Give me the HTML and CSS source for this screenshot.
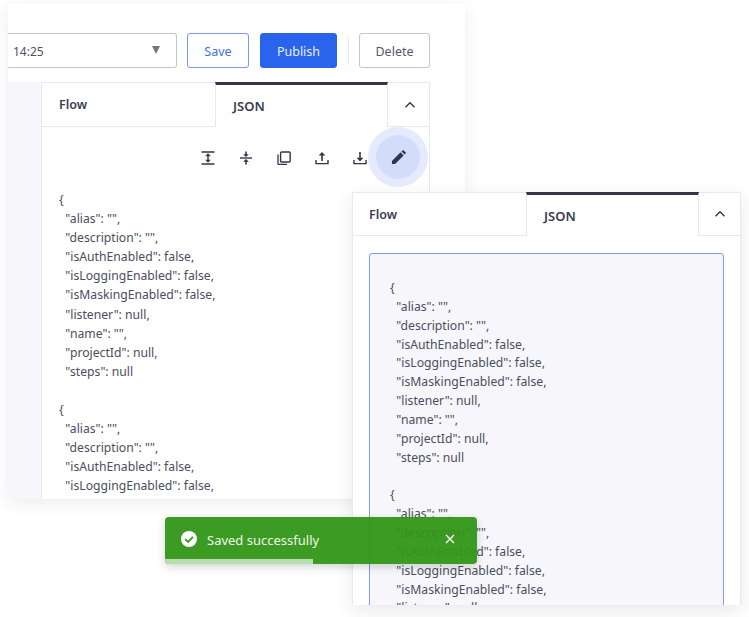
FILE: index.html
```html
<!DOCTYPE html>
<html lang="en">
<head>
<meta charset="utf-8">
<title>JSON editor</title>
<link rel="stylesheet" href="styles.css">
</head>
<body>
<section class="window back">
  <div class="toolbar">
    <div class="select"><span>14:25</span><i class="caret"></i></div>
    <button class="btn btn-save">Save</button>
    <button class="btn btn-publish">Publish</button>
    <span class="divider"></span>
    <button class="btn btn-delete">Delete</button>
  </div>
  <div class="main">
    <div class="rail"></div>
    <div class="panel panel-back">
      <div class="tabs tabs-back">
        <div class="tab">Flow</div>
        <div class="tab active">JSON</div>
        <div class="toggle"><svg width="12" height="8" viewBox="0 0 12 8"><path d="M1.5 6.2 6 1.8l4.5 4.4" fill="none" stroke="#33364a" stroke-width="1.4"/></svg></div>
      </div>
      <div class="icons">
        <svg class="ic" viewBox="0 0 14 14" width="14" height="14"><path d="M.5 1h13M.5 13h13" stroke="#33364a" stroke-width="1.4"/><path d="M7 2.2 9.8 5.200H4.200zM7 11.800 4.200 8.800h5.600zM6.300 4h1.400v6H6.300z" fill="#33364a"/></svg>
        <svg class="ic" viewBox="0 0 14 14" width="14" height="14"><path d="M1 7h12" stroke="#33364a" stroke-width="1.4"/><path d="M7 6 4.200 3.200h2V.5h1.600v2.700h2zM7 8l2.800 2.800h-2v2.700H6.200v-2.700h-2z" fill="#33364a"/></svg>
        <svg class="ic" viewBox="0 0 14 14" width="14" height="14"><path d="M1 3.500v9a1 1 0 0 0 1 1h8" fill="none" stroke="#33364a" stroke-width="1.3"/><rect x="3.600" y="1" width="9.600" height="10" rx="1" fill="none" stroke="#33364a" stroke-width="1.4"/></svg>
        <svg class="ic" viewBox="0 0 14 14" width="14" height="14"><path d="M1 9v3.600h12V9" fill="none" stroke="#33364a" stroke-width="1.4"/><path d="M7 1 10.400 4.600H7.800V10H6.200V4.600H3.600z" fill="#33364a"/></svg>
        <svg class="ic" viewBox="0 0 14 14" width="14" height="14"><path d="M1 9v3.600h12V9" fill="none" stroke="#33364a" stroke-width="1.4"/><path d="M7 10.400 3.600 6.800h2.600V1h1.600v5.800h2.600z" fill="#33364a"/></svg>
        <div class="edit"><svg viewBox="0 0 16 16" width="15" height="15"><path d="M1 15v-3.300L10.200 2.500l3.300 3.300L4.300 15zM11.200 1.500l1-1a1 1 0 0 1 1.400 0l1.900 1.900a1 1 0 0 1 0 1.400l-1 1z" fill="#33364a"/></svg></div>
      </div>
      <pre class="code code-back">{
  "alias": "",
  "description": "",
  "isAuthEnabled": false,
  "isLoggingEnabled": false,
  "isMaskingEnabled": false,
  "listener": null,
  "name": "",
  "projectId": null,
  "steps": null

{
  "alias": "",
  "description": "",
  "isAuthEnabled": false,
  "isLoggingEnabled": false,
  "isMaskingEnabled": false,</pre>
    </div>
  </div>
</section>

<section class="window front">
  <div class="tabs">
    <div class="tab">Flow</div>
    <div class="tab active">JSON</div>
    <div class="toggle"><svg width="12" height="8" viewBox="0 0 12 8"><path d="M1.5 6.2 6 1.800l4.500 4.400" fill="none" stroke="#33364a" stroke-width="1.4"/></svg></div>
  </div>
  <div class="editor-wrap">
    <pre class="code code-front">{
  "alias": "",
  "description": "",
  "isAuthEnabled": false,
  "isLoggingEnabled": false,
  "isMaskingEnabled": false,
  "listener": null,
  "name": "",
  "projectId": null,
  "steps": null

{
  "alias": "",
  "description": "",
  "isAuthEnabled": false,
  "isLoggingEnabled": false,
  "isMaskingEnabled": false,
  "listener": null,</pre>
  </div>
</section>

<div class="toast">
  <div class="toast-body">
    <svg class="check" viewBox="0 0 16 16" width="16" height="16"><circle cx="8" cy="8" r="8" fill="#fff"/><path d="M4.200 8.200 7 11l5-5.200" fill="none" stroke="#3a9b20" stroke-width="1.900"/></svg>
    <span class="toast-text">Saved successfully</span>
    <svg class="close" viewBox="0 0 10 10" width="10" height="10"><path d="M1 1l8 8M9 1 1 9" stroke="#fff" stroke-width="1.400"/></svg>
  </div>
  <div class="progress"></div>
</div>
</body>
</html>
```
FILE: styles.css
```css
html, body {
  margin: 0;
  padding: 0;
  background: #fff;
  width: 749px;
  height: 617px;
  overflow: hidden;
  font-family: "Noto Sans", "Open Sans", sans-serif;
  color: #33364a;
}
.window {
  position: absolute;
  background: #fff;
  box-sizing: border-box;
  overflow: hidden;
}
.back {
  left: 8px;
  top: 4px;
  width: 457px;
  height: 495px;
  box-shadow: 0 4px 16px rgba(40, 44, 80, .09);
}
.toolbar {
  display: flex;
  align-items: center;
  height: 35px;
  margin-top: 29px;
}
.select {
  box-sizing: border-box;
  width: 169px;
  height: 35px;
  display: flex;
  align-items: center;
  justify-content: space-between;
  padding: 1px 16px 0 5px;
  border: 1px solid #c3c5d6;
  border-left: 0;
  border-radius: 0 3px 3px 0;
  font-size: 12px;
  color: #4f5263;
}
.caret {
  width: 0;
  height: 0;
  border-left: 4px solid transparent;
  border-right: 4px solid transparent;
  border-top: 8px solid #74778a;
  margin-bottom: 2px;
}
.btn {
  box-sizing: border-box;
  height: 35px;
  border-radius: 3px;
  font: 12.500px "Noto Sans", sans-serif;
  padding: 2px 0 0;
  background: #fff;
}
.btn-save {
  width: 62px;
  margin-left: 10px;
  color: #3f6fe8;
  border: 1px solid #7a9af0;
}
.btn-publish {
  width: 77px;
  margin-left: 11px;
  color: #e8eefc;
  background: #2b64ec;
  border: 1px solid #2b64ec;
}
.divider {
  width: 1px;
  height: 29px;
  background: #e9eaf2;
  margin-left: 11px;
}
.btn-delete {
  width: 71px;
  margin-left: 10px;
  color: #55586a;
  border: 1px solid #c3c5d6;
}
.main {
  display: flex;
  margin-top: 14px;
  height: 417px;
}
.rail {
  width: 33px;
  background: #f6f6fb;
}
.panel-back {
  box-sizing: border-box;
  width: 389px;
  border-left: 1px solid #e8e8f3;
  border-right: 1px solid #e8e8f3;
  position: relative;
}
.tabs {
  display: flex;
  height: 44px;
  box-sizing: border-box;
  border-top: 1px solid #e8e8f3;
}
.tabs-back {
  height: 45px;
}
.tab {
  width: 173px;
  box-sizing: border-box;
  border-bottom: 1px solid #e8e8f3;
  padding: 13px 0 0 16px;
  font-size: 12.500px;
  font-weight: 600;
  color: #3a3d50;
}
.tabs-back .tab {
  padding-left: 17px;
}
.tab.active {
  border-top: 3px solid #33364a;
  margin-top: -1px;
  height: calc(100% + 1px);
  border-bottom: 0;
  border-left: 1px solid #e8e8f3;
  border-right: 1px solid #e8e8f3;
  padding: 12px 0 0 17px;
  font-size: 13px;
}
.toggle {
  flex: 1;
  display: flex;
  align-items: center;
  justify-content: center;
  border-bottom: 1px solid #e8e8f3;
  padding-left: 1px;
}
.tabs-back .toggle {
  padding-left: 3px;
}
.icons {
  display: flex;
  align-items: center;
  height: 62px;
  padding-left: 159px;
  position: relative;
}
.ic {
  margin-right: 24px;
  flex: none;
}
.edit {
  position: absolute;
  left: 334px;
  top: 8px;
  width: 44px;
  height: 44px;
  border-radius: 50%;
  background: #d3dcfb;
  box-shadow: 0 0 0 8px #e5eafc;
  display: flex;
  align-items: center;
  justify-content: center;
}
.code {
  margin: 0;
  font-family: "Noto Sans", sans-serif;
  font-size: 12.200px;
  color: #4a4d5e;
}
.code-back {
  padding: 1px 0 0 17px;
  line-height: 19.100px;
}
.front {
  left: 352px;
  top: 192px;
  width: 389px;
  height: 413px;
  border-left: 1px solid #e8e8f3;
  border-right: 1px solid #e8e8f3;
  box-shadow: 0 6px 18px rgba(40, 44, 80, .1);
}
.editor-wrap {
  padding: 17px 16px 0 16px;
}
.code-front {
  box-sizing: border-box;
  height: 400px;
  padding: 25px 0 0 20px;
  line-height: 18.850px;
  background: #f7f7fb;
  border: 1px solid #7f9bf5;
  border-radius: 3px;
}
.toast {
  position: absolute;
  left: 165px;
  top: 517px;
  width: 312px;
  height: 47px;
  border-radius: 4px;
  overflow: hidden;
  background: rgba(50, 150, 22, .95);
  box-shadow: 0 3px 8px rgba(30, 40, 30, .2);
  display: flex;
  flex-direction: column;
}
.toast-body {
  flex: 1;
  display: flex;
  align-items: center;
  padding: 4px 22px 0 16px;
  color: #eef7ea;
}
.check {
  flex: none;
  margin-top: -3px;
}
.toast-text {
  margin-left: 10px;
  font-size: 13px;
  flex: 1;
}
.close {
  flex: none;
  margin-top: -3px;
}
.progress {
  width: 148px;
  height: 5px;
  background: #b9dcb0;
}
```
